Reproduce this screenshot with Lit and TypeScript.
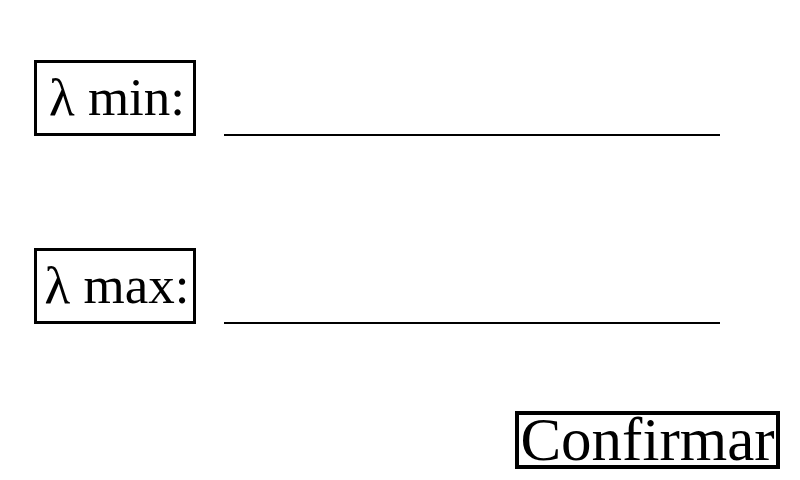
import { LitElement, html, css } from "lit";
import { customElement } from "lit/decorators.js";

@customElement("app-root")
export class AppRoot extends LitElement {
  static styles = css`
    :host {
      display: block;
      min-height: 100vh;
      box-sizing: border-box;
      padding: 60px 20px 10px 34px;
      background: #fff;
      color: #000;
      font-family: "Liberation Serif", "Times New Roman", serif;
    }
    .form {
      display: flex;
      flex-direction: column;
    }
    .field {
      display: grid;
      grid-template-columns: 162px 1fr;
      column-gap: 28px;
      margin: 0 60px 112px 0;
    }
    .field.last {
      margin-bottom: 87px;
    }
    .label {
      box-sizing: border-box;
      height: 76px;
      padding-left: 4px;
      border: 3px solid #000;
      font-size: 53px;
      line-height: 68px;
      text-align: center;
      white-space: nowrap;
    }
    .input {
      box-sizing: border-box;
      min-width: 0;
      width: 100%;
      height: 76px;
      padding: 0;
      border: 0;
      border-bottom: 2px solid #000;
      border-radius: 0;
      outline: 0;
      background: transparent;
      color: inherit;
      font: inherit;
      font-size: 53px;
    }
    .confirm {
      align-self: flex-end;
      box-sizing: border-box;
      width: 265px;
      height: 58px;
      padding: 0;
      border: 4px solid #000;
      border-radius: 0;
      background: #fff;
      color: inherit;
      font-family: inherit;
      font-size: 61px;
      line-height: 50px;
      font-variant-ligatures: none;
      white-space: nowrap;
      cursor: pointer;
    }
  `;

  render() {
    return html`
      <form class="form" @submit=${(e: Event) => e.preventDefault()}>
        <div class="field">
          <label class="label" for="min">λ min:</label>
          <input class="input" id="min" type="text" inputmode="decimal" />
        </div>
        <div class="field last">
          <label class="label" for="max">λ max:</label>
          <input class="input" id="max" type="text" inputmode="decimal" />
        </div>
        <button class="confirm" type="submit">Confirmar</button>
      </form>
    `;
  }
}
